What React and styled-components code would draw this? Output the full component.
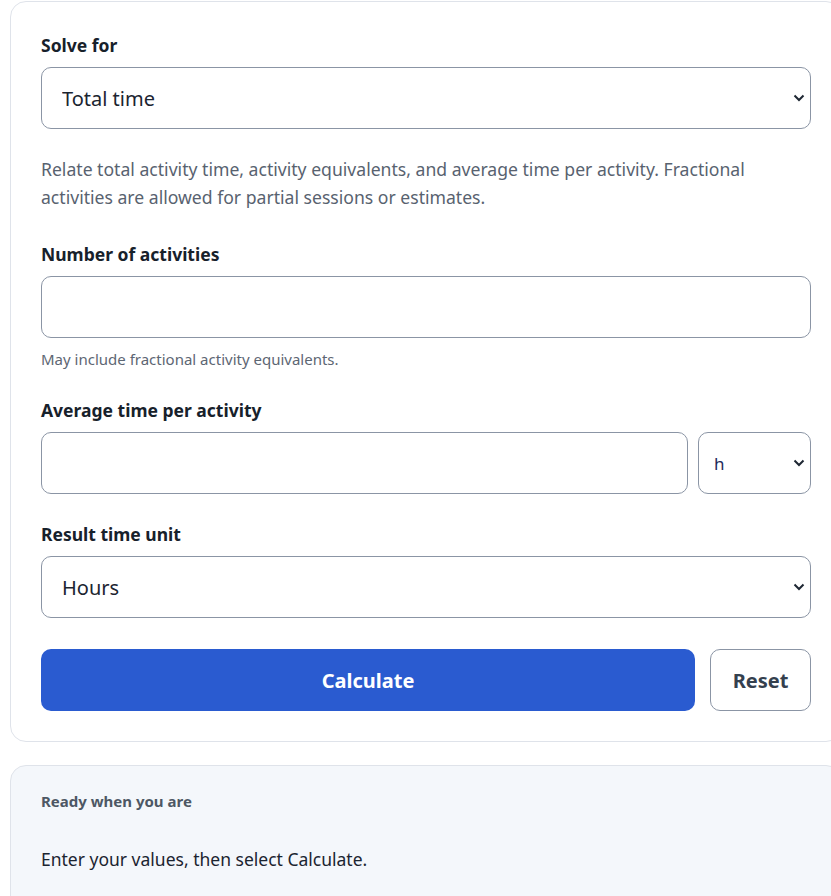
import React from 'react';
import styled, { createGlobalStyle } from 'styled-components';

const GlobalStyle = createGlobalStyle`
  html, body {
    margin: 0;
    padding: 0;
    background: #ffffff;
    overflow: hidden;
  }
  body {
    font-family: "Noto Sans", "Open Sans", sans-serif;
    color: #1b2430;
  }
  * {
    box-sizing: border-box;
  }
`;

const Page = styled.div`
  display: flex;
  flex-direction: column;
  gap: 23px;
  padding: 1px 0 0 10px;
  width: 842px;
`;

const Card = styled.form`
  display: flex;
  flex-direction: column;
  background: #ffffff;
  border: 1px solid #dfe3ea;
  border-radius: 16px;
  padding: 31px 30px 30px 30px;
`;

const Field = styled.div`
  display: flex;
  flex-direction: column;
  margin-top: ${props => props.$top || 0}px;
`;

const Label = styled.label`
  font-size: 17.5px;
  font-weight: 700;
  line-height: 24px;
  color: #17212b;
  margin-bottom: 10px;
`;

const Row = styled.div`
  display: flex;
  gap: 10px;
`;

const SelectWrap = styled.div`
  position: relative;
  flex: ${props => props.$width ? `0 0 ${props.$width}px` : '1 1 auto'};
`;

const Select = styled.select`
  appearance: none;
  width: 100%;
  height: 62px;
  border: 1px solid #8b95a5;
  border-radius: 10px;
  background: #ffffff;
  font-family: inherit;
  font-size: ${props => props.$small ? '17px' : '20px'};
  color: ${props => props.$small ? '#1e2a5a' : '#1b2430'};
  padding: 0 36px 0 ${props => props.$small ? '15px' : '20px'};
  outline: none;
`;

const Chevron = styled.svg`
  position: absolute;
  right: 6px;
  top: 50%;
  width: 12px;
  height: 8px;
  margin-top: -4px;
  pointer-events: none;
`;

const Input = styled.input`
  flex: ${props => props.$grow ? '1 1 0' : '0 0 auto'};
  width: 100%;
  min-width: 0;
  height: 62px;
  border: 1px solid #8b95a5;
  border-radius: 10px;
  background: #ffffff;
  font-family: inherit;
  font-size: 20px;
  padding: 0 16px;
  outline: none;
`;

const Description = styled.p`
  margin: 26px 0 0 0;
  font-size: 17.6px;
  line-height: 28px;
  color: #58626f;
`;

const Hint = styled.p`
  margin: 10px 0 0 0;
  font-size: 15px;
  line-height: 22px;
  color: #5d6673;
`;

const Actions = styled.div`
  display: flex;
  gap: 15px;
  margin-top: 31px;
`;

const Button = styled.button`
  height: 62px;
  border-radius: 10px;
  font-family: inherit;
  font-size: 20px;
  font-weight: 700;
  cursor: pointer;
  flex: ${props => props.$primary ? '1' : '0 0 101px'};
  background: ${props => props.$primary ? '#2a5bd0' : '#ffffff'};
  color: ${props => props.$primary ? '#ffffff' : '#34404e'};
  border: ${props => props.$primary ? 'none' : '1px solid #8b95a5'};
`;

const ResultCard = styled.div`
  background: #f4f7fb;
  border: 1px solid #dfe3ea;
  border-radius: 16px;
  padding: 25px 30px 40px 30px;
  height: 160px;
`;

const ResultTitle = styled.div`
  font-size: 15px;
  font-weight: 700;
  line-height: 20px;
  color: #4d5764;
`;

const ResultText = styled.div`
  margin-top: 36px;
  font-size: 17.5px;
  line-height: 24px;
  color: #1b2430;
`;

const ChevronIcon = () => (
  <Chevron viewBox="0 0 12 8">
    <path d="M1.5 1.5 L6 6 L10.5 1.5" fill="none" stroke="#1e2733" strokeWidth="2" />
  </Chevron>
);

const SelectBox = ({ value, options, small, width }) => (
  <SelectWrap $width={width}>
    <Select $small={small} defaultValue={value}>
      {options.map(o => <option key={o}>{o}</option>)}
    </Select>
    <ChevronIcon />
  </SelectWrap>
);

export default function App() {
  return (
    <>
      <GlobalStyle />
      <Page>
        <Card onSubmit={e => e.preventDefault()}>
          <Field>
            <Label>Solve for</Label>
            <SelectBox value="Total time" options={['Total time', 'Number of activities', 'Average time per activity']} />
          </Field>

          <Description>
            Relate total activity time, activity equivalents, and average time per activity. Fractional
            activities are allowed for partial sessions or estimates.
          </Description>

          <Field $top={31}>
            <Label>Number of activities</Label>
            <Input type="text" />
            <Hint>May include fractional activity equivalents.</Hint>
          </Field>

          <Field $top={28}>
            <Label>Average time per activity</Label>
            <Row>
              <Input type="text" $grow />
              <SelectBox value="h" options={['s', 'min', 'h', 'd']} small width={113} />
            </Row>
          </Field>

          <Field $top={28}>
            <Label>Result time unit</Label>
            <SelectBox value="Hours" options={['Seconds', 'Minutes', 'Hours', 'Days']} />
          </Field>

          <Actions>
            <Button type="submit" $primary>Calculate</Button>
            <Button type="reset">Reset</Button>
          </Actions>
        </Card>

        <ResultCard>
          <ResultTitle>Ready when you are</ResultTitle>
          <ResultText>Enter your values, then select Calculate.</ResultText>
        </ResultCard>
      </Page>
    </>
  );
}
